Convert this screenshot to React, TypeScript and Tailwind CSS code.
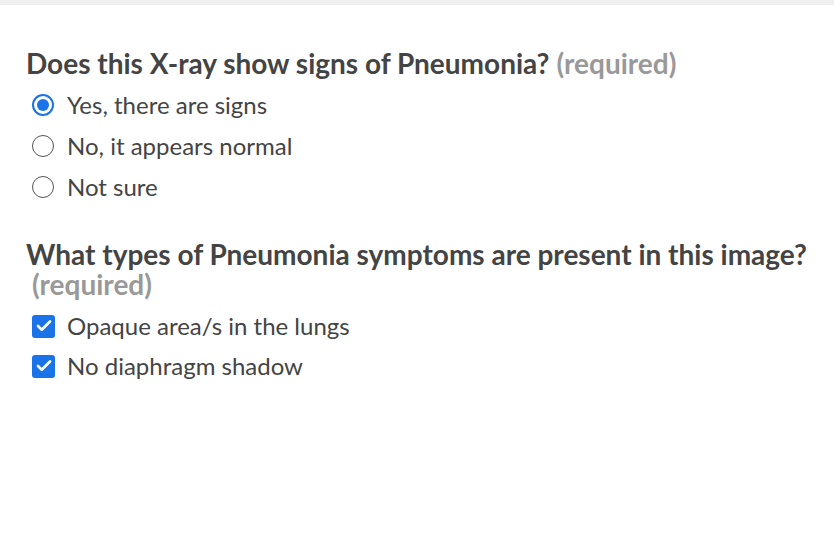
import { Check } from "lucide-react";

const radios = [
  { label: "Yes, there are signs", checked: true },
  { label: "No, it appears normal", checked: false },
  { label: "Not sure", checked: false },
];

const boxes = ["Opaque area/s in the lungs", "No diaphragm shadow"];

const Radio = ({ checked }: { checked: boolean }) => (
  <span
    className={`flex items-center justify-center size-[22px] rounded-full ${
      checked ? "border-[2.5px] border-[#1a73e8]" : "border-[1.5px] border-[#555]"
    }`}
  >
    {checked && <span className="size-[12px] rounded-full bg-[#1a73e8]" />}
  </span>
);

const Box = () => (
  <span className="flex items-center justify-center size-[23px] rounded-[3px] bg-[#1a73e8]">
    <Check className="size-[18px] text-white" strokeWidth={3.5} />
  </span>
);

export default function App() {
  return (
    <div className="w-[834px] h-[549px] bg-white font-['Lato',sans-serif] text-[#444]">
      <div className="h-[5px] bg-[#efefef]" />
      <div className="pl-[26px] pr-6 pt-[43px]">
        <h2 className="text-[28px] font-bold leading-[30px]">
          Does this X-ray show signs of Pneumonia?
          <span className="inline-block ml-[7px] text-[#999]">(required)</span>
        </h2>
        <div className="flex flex-col mt-[6px]">
          {radios.map((r) => (
            <label key={r.label} className="flex items-center gap-[13px] h-[41px] pl-[6px]">
              <Radio checked={r.checked} />
              <span className="text-[24px]">{r.label}</span>
            </label>
          ))}
        </div>
        <h2 className="text-[28px] font-bold leading-[30px] mt-[32px]">
          What types of Pneumonia symptoms are present in this image?
          <span className="inline-block ml-[6px] text-[#999]">(required)</span>
        </h2>
        <div className="flex flex-col mt-[7px]">
          {boxes.map((b) => (
            <label key={b} className="flex items-center gap-[12px] h-[40px] pl-[6px]">
              <Box />
              <span className="text-[24px]">{b}</span>
            </label>
          ))}
        </div>
      </div>
    </div>
  );
}
